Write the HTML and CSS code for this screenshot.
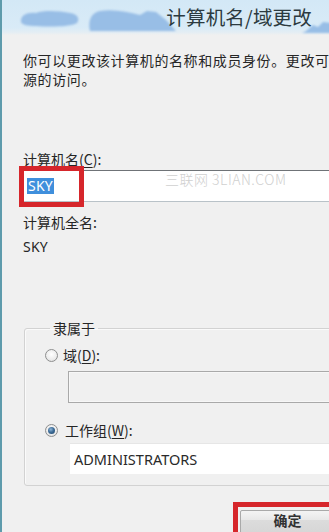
FILE: index.html
```html
<!DOCTYPE html>
<html lang="zh-CN">
<head>
<meta charset="utf-8">
<title>计算机名/域更改</title>
<link rel="stylesheet" href="styles.css">
</head>
<body>
<div class="window">
  <div class="titlebar">
    <svg class="clouds" width="331" height="36" viewBox="0 0 331 36" aria-hidden="true">
      <defs>
        <filter id="blur" x="-10%" y="-50%" width="120%" height="200%">
          <feGaussianBlur stdDeviation="1.2"/>
        </filter>
      </defs>
      <g fill="#98bee6" filter="url(#blur)">
        <path d="M21 22 C20 15 28 12 36 13 C44 10 60 11 70 13 C78 14 80 19 77 23 C70 27 50 27 36 26 C28 26 22 25 21 22 Z"/>
        <path d="M90 31 C88 22 90 13 100 11 C114 9 128 12 140 15 L147 11 L156 12 L166 20 L176 31 Z"/>
        <path d="M306 31 L313 25 L318 27 L323 22 L331 23 L331 33 L302 33 Z"/>
      </g>
    </svg>
    <h1 class="title">计算机名/域更改</h1>
  </div>
  <div class="content">
    <p class="desc">你可以更改该计算机的名称和成员身份。更改可</p>
    <p class="desc-2">源的访问。</p>

    <label class="label label-name">计算机名(<u>C</u>):</label>
    <div class="field field-name">
      <span class="selected">SKY</span>
      <span class="watermark">三联网 3LIAN.COM</span>
      <span class="highlight highlight-name"></span>
    </div>

    <div class="label label-full">计算机全名:</div>
    <div class="value">SKY</div>

    <fieldset class="group">
      <legend class="legend">隶属于</legend>
      <div class="radio-row radio-domain">
        <span class="radio"></span>
        <span>域(<u>D</u>):</span>
      </div>
      <div class="field field-domain"></div>
      <div class="radio-row radio-work">
        <span class="radio radio-on"></span>
        <span>工作组(<u>W</u>):</span>
      </div>
      <div class="field field-work">ADMINISTRATORS</div>
    </fieldset>

    <div class="buttons">
      <div class="btn-wrap">
        <span class="highlight highlight-btn"></span>
        <button class="btn" type="button">确定</button>
      </div>
    </div>
  </div>
</div>
</body>
</html>
```

FILE: styles.css
```css
html, body {
  margin: 0;
  padding: 0;
  width: 329px;
  height: 532px;
  overflow: hidden;
  background: #f0f0f0;
}

body {
  font-family: "Noto Sans", "Noto Sans CJK SC", sans-serif;
  color: #262626;
}

.window {
  width: 329px;
  height: 532px;
  box-sizing: border-box;
  border-left: 2px solid #5e9bac;
  display: flex;
  flex-direction: column;
  overflow: hidden;
}

.titlebar {
  position: relative;
  height: 35px;
  background: linear-gradient(180deg, #d3e8f6 0%, #d9ebf7 80%, #e6eef3 94%, #f0f0f0 100%);
  display: flex;
  justify-content: flex-end;
  align-items: flex-start;
  flex-shrink: 0;
}

.clouds {
  position: absolute;
  left: -2px;
  top: 0;
}

.title {
  position: relative;
  margin: 5px 17px 0 0;
  font-family: "Noto Sans CJK SC", sans-serif;
  font-weight: 400;
  font-size: 19.5px;
  line-height: 24px;
  color: #2c3a40;
  letter-spacing: 0.2px;
}

.content {
  padding-left: 21px;
  display: flex;
  flex-direction: column;
  font-size: 14px;
}

.desc {
  margin: 16px -20px 0 0;
  white-space: nowrap;
  font-family: "Noto Sans CJK SC", sans-serif;
  font-size: 14px;
  letter-spacing: 0.6px;
  line-height: 19px;
  height: 19px;
}

.desc-2 {
  margin: 0;
  font-family: "Noto Sans CJK SC", sans-serif;
  font-size: 14px;
  letter-spacing: 0.6px;
  line-height: 19px;
}

.label {
  font-family: "Noto Sans CJK SC", sans-serif;
  font-size: 14px;
  line-height: 19px;
}

.label-name {
  margin-top: 61px;
}

.label u, .radio-row u {
  text-decoration-thickness: 1px;
  text-underline-offset: 2px;
}

.field {
  position: relative;
  box-sizing: border-box;
  border: 1px solid #b9c2c8;
  border-top-color: #6f7377;
  background: #fff;
  margin-right: -20px;
}

.field-name {
  margin-top: 1px;
  margin-left: -3px;
  height: 32px;
  display: flex;
  align-items: center;
  padding-left: 6px;
}

.selected {
  background: #3f8fdc;
  color: #fff;
  font-size: 14px;
  line-height: 16px;
  padding: 0 1px;
  letter-spacing: 0.2px;
}

.watermark {
  position: absolute;
  left: 144px;
  top: -2px;
  font-family: "Noto Sans CJK SC", sans-serif;
  font-size: 14px;
  font-weight: 300;
  color: #d0d0d0;
  letter-spacing: 0.5px;
}

.highlight {
  position: absolute;
  box-sizing: border-box;
  border: 5px solid #d6262b;
  pointer-events: none;
}

.highlight-name {
  left: -2px;
  top: -5px;
  width: 65px;
  height: 41px;
}

.label-full {
  margin-top: 11px;
}

.value {
  margin-top: 5px;
  font-size: 14px;
  line-height: 19px;
  letter-spacing: 0.2px;
}

.group {
  margin: 64px -20px 0 1px;
  padding: 10px 0 11px 19px;
  border: 1px solid #d2d2d2;
  border-radius: 3px;
  box-shadow: inset 1px 1px 0 #fafafa;
  display: flex;
  flex-direction: column;
}

.legend {
  margin-left: 6px;
  padding: 0 3px;
  font-family: "Noto Sans CJK SC", sans-serif;
  font-size: 14px;
  line-height: 16px;
}

.radio-row {
  display: flex;
  align-items: center;
  gap: 5px;
  font-family: "Noto Sans CJK SC", sans-serif;
  font-size: 14px;
  line-height: 19px;
}

.radio {
  width: 13px;
  height: 13px;
  box-sizing: border-box;
  border-radius: 50%;
  border: 1px solid #8e8f8f;
  background: radial-gradient(circle at 50% 40%, #ffffff 0%, #ececec 60%, #d4d4d4 100%);
  display: flex;
  align-items: center;
  justify-content: center;
}

.radio-on::after {
  content: "";
  width: 7px;
  height: 7px;
  border-radius: 50%;
  background: radial-gradient(circle at 40% 35%, #8fb6d8 0%, #3e6d98 45%, #1d4368 100%);
}

.radio-domain {
  margin-left: 1px;
}

.field-domain {
  margin-top: 6px;
  margin-left: 24px;
  height: 32px;
  background: #f0f0f0;
  border: 1px solid #a9a9a9;
  box-shadow: inset 0 0 0 1px #f7f7f7;
}

.radio-work {
  margin-top: 18px;
  margin-left: 1px;
}

.radio-work span:last-child {
  margin-left: 2px;
}

.field-work {
  margin-top: 3px;
  margin-left: 26px;
  height: 31px;
  border: none;
  border-top: 1px solid #e6e6e6;
  padding-left: 4px;
  display: flex;
  align-items: center;
  font-size: 14.5px;
  color: #2a2a2a;
}

.buttons {
  margin-top: 16px;
  display: flex;
  justify-content: flex-end;
  margin-right: -20px;
}

.btn-wrap {
  position: relative;
  width: 116px;
  height: 32px;
  display: flex;
  align-items: flex-start;
  padding: 8px 0 0 7px;
  box-sizing: border-box;
}

.highlight-btn {
  left: 0;
  top: 0;
  width: 100%;
  height: 40px;
}

.btn {
  flex: 1;
  height: 24px;
  border: 1px solid #a9a9a9;
  border-radius: 2px;
  background: linear-gradient(180deg, #f4f4f4 0%, #e8e8e8 40%, #dcdcdc 41%, #d6d6d6 100%);
  font-family: "Noto Sans CJK SC", sans-serif;
  font-size: 14px;
  font-weight: 700;
  color: #333;
  padding: 0 14px 4px 0;
  line-height: 16px;
  text-align: center;
}
```
